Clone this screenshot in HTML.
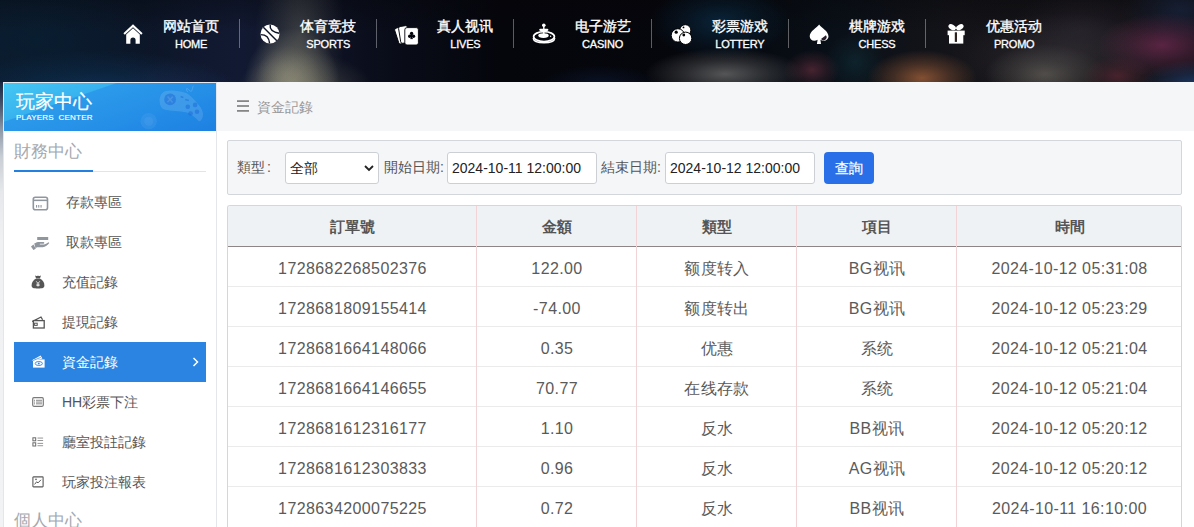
<!DOCTYPE html>
<html><head><meta charset="utf-8">
<style>
*{box-sizing:border-box;margin:0;padding:0}
html,body{width:1194px;height:527px;overflow:hidden}
body{font-family:"Liberation Sans",sans-serif;background:#f0f1f3;position:relative}
.abs{position:absolute}
#hdr{left:0;top:0;width:1194px;height:82px;background:#070a14;overflow:hidden}
#hdr .g{position:absolute;border-radius:50%}
#lstrip{left:0;top:82px;width:3px;height:445px;background:linear-gradient(#1a2640 0px,#45536b 22px,#8e99a8 48px,#c9ced5 75px,#e6e8eb 110px,#f0f1f3 160px,#f2f3f4 445px)}
.nav{position:absolute;top:0;height:82px;color:#fff}
.nav .cn{position:absolute;top:17px;font-size:14px;-webkit-text-stroke:0.35px #fff;line-height:18px;white-space:nowrap;text-align:center;width:90px}
.nav .en{position:absolute;top:37px;font-size:11px;line-height:14px;white-space:nowrap;text-align:center;width:90px;letter-spacing:-0.2px;-webkit-text-stroke:0.3px #fff}
.nav .sep{position:absolute;top:19px;width:1px;height:29px;background:rgba(255,255,255,0.35)}
.nav svg{position:absolute}
#side{left:3px;top:82px;width:214px;height:470px;background:#fff;border:1px solid #e3e6ea;border-top-color:#e8eaee}
#banner{left:4px;top:83px;width:212px;height:48px;background:linear-gradient(161deg,#44c8f4 0%,#38b2ef 31.5%,#2c9aea 32.5%,#2792e8 55%,#2188e5 80%,#1e80e1 100%);overflow:hidden}
#crumb{left:217px;top:82px;width:977px;height:49px;background:#f5f6f8}
#main{left:217px;top:131px;width:977px;height:396px;background:#fff}
.menu{position:absolute;left:62px;font-size:14px;color:#555;line-height:20px;white-space:nowrap}
#filter{left:227px;top:140px;width:955px;height:55px;background:#f5f6f8;border:1px solid #d3d7dc;border-radius:2px}
.lbl{position:absolute;font-size:14px;color:#555;line-height:16px;white-space:nowrap}
.inp{position:absolute;top:152px;height:32px;background:#fff;border:1px solid #ccd0d5;border-radius:3px;font-size:14px;color:#222;line-height:30px;padding-left:4px;white-space:nowrap}
#tbl{left:227px;top:205px;width:955px;height:330px;border:1px solid #d3d7dc;border-right-color:#efc9cd;border-radius:3px 3px 0 0;background:#fff;overflow:hidden}
.th{position:absolute;top:0;height:41px;background:#eff2f5;border-bottom:1px solid #8f8587}
.cell{position:absolute;text-align:center;font-size:16px;color:#5a5a5a;white-space:nowrap;letter-spacing:0.4px}
.hcell{position:absolute;text-align:center;font-size:15px;font-weight:bold;color:#555;white-space:nowrap}
.vl{position:absolute;top:0;width:1px;height:330px;background:#f2d3d6}
.hl{position:absolute;left:0;width:955px;height:1px;background:#ebebeb}
</style></head>
<body>
<div id="hdr" class="abs" style="background:linear-gradient(180deg,rgba(5,5,8,0.35),rgba(0,0,0,0) 40%),linear-gradient(90deg,#0c1a2c 0%,#0c1628 12%,#121a33 20%,#0a0d1a 32%,#05060c 42%,#05070d 60%,#0a1018 70%,#141419 80%,#151316 90%,#16131a 100%)"><div class="g" style="left:-55px;top:50px;width:300px;height:90px;background:radial-gradient(closest-side,rgba(15,70,120,0.6),rgba(15,70,120,0.270) 50%,rgba(15,70,120,0))"></div><div class="g" style="left:-80px;top:-20px;width:240px;height:120px;background:radial-gradient(closest-side,rgba(5,35,55,0.45),rgba(5,35,55,0.203) 50%,rgba(5,35,55,0))"></div><div class="g" style="left:1120px;top:-25px;width:120px;height:70px;background:radial-gradient(closest-side,rgba(25,45,80,0.5),rgba(25,45,80,0.225) 50%,rgba(25,45,80,0))"></div><div class="g" style="left:115px;top:60px;width:120px;height:60px;background:radial-gradient(closest-side,rgba(40,40,80,0.35),rgba(40,40,80,0.158) 50%,rgba(40,40,80,0))"></div><div class="g" style="left:244px;top:28px;width:96px;height:116px;background:radial-gradient(closest-side,rgba(175,170,145,0.85),rgba(175,170,145,0.383) 50%,rgba(175,170,145,0))"></div><div class="g" style="left:256px;top:46px;width:64px;height:60px;background:radial-gradient(closest-side,rgba(150,150,130,0.45),rgba(150,150,130,0.203) 50%,rgba(150,150,130,0))"></div><div class="g" style="left:237px;top:52px;width:136px;height:76px;background:radial-gradient(closest-side,rgba(125,122,102,0.55),rgba(125,122,102,0.248) 50%,rgba(125,122,102,0))"></div><div class="g" style="left:255px;top:-50px;width:90px;height:170px;background:radial-gradient(closest-side,rgba(110,110,95,0.45),rgba(110,110,95,0.203) 50%,rgba(110,110,95,0))"></div><div class="g" style="left:540px;top:65px;width:120px;height:40px;background:radial-gradient(closest-side,rgba(15,35,70,0.5),rgba(15,35,70,0.225) 50%,rgba(15,35,70,0))"></div><div class="g" style="left:645px;top:48px;width:160px;height:52px;background:radial-gradient(closest-side,rgba(105,105,105,0.8),rgba(105,105,105,0.360) 50%,rgba(105,105,105,0))"></div><div class="g" style="left:650px;top:-16px;width:140px;height:76px;background:radial-gradient(closest-side,rgba(12,55,85,0.6),rgba(12,55,85,0.270) 50%,rgba(12,55,85,0))"></div><div class="g" style="left:784px;top:50px;width:56px;height:40px;background:radial-gradient(closest-side,rgba(110,50,65,0.6),rgba(110,50,65,0.270) 50%,rgba(110,50,65,0))"></div><div class="g" style="left:825px;top:32px;width:60px;height:60px;background:radial-gradient(closest-side,rgba(15,50,60,0.55),rgba(15,50,60,0.248) 50%,rgba(15,50,60,0))"></div><div class="g" style="left:867px;top:50px;width:110px;height:56px;background:radial-gradient(closest-side,rgba(150,90,55,0.85),rgba(150,90,55,0.383) 50%,rgba(150,90,55,0))"></div><div class="g" style="left:985px;top:44px;width:120px;height:60px;background:radial-gradient(closest-side,rgba(105,102,92,0.75),rgba(105,102,92,0.338) 50%,rgba(105,102,92,0))"></div><div class="g" style="left:1010px;top:-10px;width:140px;height:80px;background:radial-gradient(closest-side,rgba(45,40,55,0.5),rgba(45,40,55,0.225) 50%,rgba(45,40,55,0))"></div><div class="g" style="left:950px;top:13px;width:220px;height:90px;background:radial-gradient(closest-side,rgba(70,66,72,0.45),rgba(70,66,72,0.203) 50%,rgba(70,66,72,0))"></div><div class="g" style="left:1083px;top:56px;width:70px;height:40px;background:radial-gradient(closest-side,rgba(100,40,55,0.6),rgba(100,40,55,0.270) 50%,rgba(100,40,55,0))"></div><div class="g" style="left:1097px;top:13px;width:130px;height:64px;background:radial-gradient(closest-side,rgba(125,45,88,0.65),rgba(125,45,88,0.293) 50%,rgba(125,45,88,0))"></div><div class="g" style="left:1139px;top:60px;width:110px;height:52px;background:radial-gradient(closest-side,rgba(30,75,140,0.65),rgba(30,75,140,0.293) 50%,rgba(30,75,140,0))"></div><div class="nav" style="left:0;width:1194px"><svg width="20" height="20" viewBox="0 0 20 20" style="left:122.5px;top:24px"><path d="M10 0.3 L19.6 9.3 L18.2 10.8 L10 3.2 L1.8 10.8 L0.4 9.3 Z" fill="#fff"/><path d="M3.2 10.4 L10 4.2 L16.8 10.4 V19.8 H12.6 V16.2 A2.6 2.6 0 0 0 7.4 16.2 V19.8 H3.2 Z" fill="#fff"/></svg><div class="cn" style="left:146.0px">网站首页</div><div class="en" style="left:146.0px">HOME</div><div class="sep" style="left:239px"></div><svg width="20" height="20" viewBox="0 0 20 20" style="left:259.5px;top:24px"><circle cx="10" cy="10" r="9.5" fill="#fff"/><g fill="none" stroke="#0d1326" stroke-width="1.4"><path d="M3.3 3.2 L16.8 16.7"/><path d="M10.2 0.6 C9.6 4.5 12.5 8 19.2 9.2"/><path d="M0.7 10.6 C6 10.6 9.2 13.5 9.6 19.4"/></g></svg><div class="cn" style="left:283.2px">体育竞技</div><div class="en" style="left:283.2px">SPORTS</div><div class="sep" style="left:376px"></div><svg width="26" height="25" viewBox="394 22 26 25" style="left:394px;top:22px"><rect x="396.5" y="27" width="9" height="16.5" rx="1.8" transform="rotate(-18 401 35.2)" fill="#fff" stroke="#03040a" stroke-width="0.9"/><rect x="399.6" y="26" width="9" height="17" rx="1.8" transform="rotate(-9 404 34.5)" fill="#fff" stroke="#03040a" stroke-width="0.9"/><rect x="404.8" y="27.6" width="13.6" height="17.4" rx="2.2" fill="#fff" stroke="#03040a" stroke-width="0.9"/><g fill="#03040a"><circle cx="411.6" cy="33.5" r="1.7"/><circle cx="409.7" cy="36.3" r="1.7"/><circle cx="413.5" cy="36.3" r="1.7"/><rect x="411" y="34" width="1.2" height="4.6"/><rect x="410.3" y="38.2" width="2.6" height="0.9"/></g></svg><div class="cn" style="left:420.4px">真人视讯</div><div class="en" style="left:420.4px">LIVES</div><div class="sep" style="left:513px"></div><svg width="24" height="22" viewBox="0 0 24 22" style="left:531.5px;top:23px"><g fill="none" stroke="#fff"><ellipse cx="12" cy="13.6" rx="10.4" ry="4.9" stroke-width="1.7"/><path d="M1.2 15.2 C2 21.4 22 21.4 22.8 15.2" stroke-width="1.5"/></g><ellipse cx="11.5" cy="12.6" rx="5.2" ry="2.3" fill="#fff"/><circle cx="11.8" cy="2.3" r="1.8" fill="#fff"/><rect x="11.1" y="3" width="1.4" height="9.5" fill="#fff"/><rect x="7.2" y="5.7" width="9.2" height="2.3" rx="1.15" fill="#fff"/><circle cx="18.6" cy="13.3" r="0.7" fill="#fff"/></svg><div class="cn" style="left:557.6px">电子游艺</div><div class="en" style="left:557.6px">CASINO</div><div class="sep" style="left:651px"></div><svg width="22" height="21" viewBox="0 0 22 21" style="left:670.5px;top:24px"><circle cx="14.3" cy="6.2" r="5.5" fill="#fff" stroke="#000" stroke-width="0.9"/><circle cx="6.9" cy="11.4" r="6.7" fill="#fff" stroke="#000" stroke-width="1"/><circle cx="14.6" cy="14.3" r="6.2" fill="#fff" stroke="#000" stroke-width="1"/><circle cx="12.5" cy="3.4" r="0.9" fill="#000"/><circle cx="5.2" cy="8.2" r="1.6" fill="#000"/><circle cx="12.8" cy="11" r="1.4" fill="#000"/></svg><div class="cn" style="left:694.8px">彩票游戏</div><div class="en" style="left:694.8px">LOTTERY</div><div class="sep" style="left:788px"></div><svg width="20" height="20" viewBox="0 0 20 20" style="left:808.5px;top:24px"><path d="M10.1 0.5 C8 3.6 0.7 7.2 0.7 12.2 C0.7 15.8 4.6 18 8.6 15.8 L7.9 19.9 H12.1 L11.4 15.8 C15.4 18 19.5 15.8 19.5 12.2 C19.5 7.2 12.2 3.6 10.1 0.5Z" fill="#fff"/><path d="M12 15.1 L16.9 11.3 A3.1 3.1 0 0 1 12 15.1 Z" fill="#2a1e2c"/></svg><div class="cn" style="left:832.0px">棋牌游戏</div><div class="en" style="left:832.0px">CHESS</div><div class="sep" style="left:925px"></div><svg width="19" height="20" viewBox="0 0 19 20" style="left:946.5px;top:24px"><ellipse cx="5.2" cy="3.2" rx="4" ry="2.6" transform="rotate(28 5.2 3.2)" fill="#fff"/><ellipse cx="12.8" cy="3.2" rx="4" ry="2.6" transform="rotate(-28 12.8 3.2)" fill="#fff"/><rect x="0.6" y="6.6" width="17.1" height="4.6" fill="#fff"/><rect x="2" y="11" width="14.3" height="8.6" fill="#fff"/><rect x="7.8" y="8.3" width="2.2" height="9.6" fill="#2e2220"/></svg><div class="cn" style="left:969.2px">优惠活动</div><div class="en" style="left:969.2px">PROMO</div></div></div>
<div id="lstrip" class="abs"></div>
<div id="side" class="abs"></div>
<div id="banner" class="abs"><div style="position:absolute;left:12px;top:8px;font-size:19px;line-height:22px;color:#fff;white-space:nowrap;-webkit-text-stroke:0.2px #fff">玩家中心</div><div style="position:absolute;left:12px;top:30px;font-size:8px;line-height:9px;color:#fff;letter-spacing:0.2px;white-space:nowrap;-webkit-text-stroke:0.15px #fff">PLAYERS&nbsp; CENTER</div><svg width="212" height="48" viewBox="4 83 212 48" style="position:absolute;left:0;top:0"><path d="M165.1 91.2 C161 93 159.4 97 159.6 101.2 C159.8 105.5 161.5 108.5 164.2 109.4 C171 111 180 111 186 112.2 C191 113.5 195 117 198.8 121.3 C201.5 121.8 203.5 117 202.9 113.1 C202 109 200 106 197.9 104 C194 99 190 95 186 93 C179 90.5 171 89.8 165.1 91.2Z" fill="rgba(255,255,255,0.12)"/><circle cx="170.1" cy="99.4" r="5.9" fill="rgba(30,110,215,0.55)"/><path d="M167.6 96.4 L172.6 102.4 M172.8 96.6 L167.4 102.2" stroke="rgba(255,255,255,0.12)" stroke-width="1.6"/><path d="M180.6 96.4 L183.4 97.6 M185.2 99.6 L188.8 100.6" stroke="rgba(30,110,215,0.55)" stroke-width="1.6"/><g fill="rgba(30,110,215,0.55)"><circle cx="187.8" cy="106.7" r="2.3"/><circle cx="195.1" cy="104.9" r="2.3"/><circle cx="190.6" cy="113.5" r="2.3"/><circle cx="197" cy="111.7" r="2.3"/></g><path d="M187.8 92.1 C186 90 186.4 88.2 187 88.4 C189 89.5 190.5 92 191.5 91.2 C192.5 90 192.4 87.5 193.3 85.7" fill="none" stroke="rgba(255,255,255,0.14)" stroke-width="1"/><circle cx="148.7" cy="121.3" r="8.2" fill="rgba(255,255,255,0.06)"/><circle cx="148.7" cy="121.3" r="4.5" fill="rgba(255,255,255,0.05)"/></svg></div>
<div class="abs" style="left:14px;top:142px;font-size:17px;line-height:20px;color:#a4a9b0;white-space:nowrap">財務中心</div>
<div class="abs" style="left:14px;top:171px;width:192px;height:1px;background:#e2e4e8"></div>
<div class="abs" style="left:14px;top:170px;width:79px;height:2px;background:#2280e0"></div>
<div class="abs" style="left:14px;top:342px;width:192px;height:40px;background:#2b84e2"></div>
<div class="menu" style="left:66px;top:192px;color:#555">存款專區</div>
<div class="menu" style="left:66px;top:232px;color:#555">取款專區</div>
<div class="menu" style="left:62px;top:272px;color:#555">充值記錄</div>
<div class="menu" style="left:62px;top:312px;color:#555">提現記錄</div>
<div class="menu" style="left:62px;top:352px;color:#fff">資金記錄</div>
<div class="menu" style="left:62px;top:392px;color:#555">HH彩票下注</div>
<div class="menu" style="left:62px;top:432px;color:#555">廳室投註記錄</div>
<div class="menu" style="left:62px;top:472px;color:#555">玩家投注報表</div>
<div class="abs" style="left:14px;top:511px;font-size:17px;line-height:20px;color:#a4a9b0;white-space:nowrap">個人中心</div>
<svg class="abs" width="8" height="10" viewBox="0 0 8 10" style="left:192px;top:357px"><path d="M1.5 1 L5.5 5 L1.5 9" fill="none" stroke="#fff" stroke-width="1.5"/></svg>
<svg class="abs" width="17" height="15" viewBox="0 0 17 15" style="left:31.5px;top:195.5px"><rect x="1.3" y="1.2" width="14.2" height="12.6" rx="2" fill="none" stroke="#8f969e" stroke-width="1.6"/><rect x="1.3" y="3.6" width="14.2" height="1.5" fill="#8f969e"/><g fill="#8f969e"><rect x="4" y="9" width="1.1" height="2.6"/><rect x="6.2" y="9" width="1.1" height="2.6"/><rect x="8.5" y="9" width="1.1" height="2.6"/></g></svg>
<svg class="abs" width="20" height="14" viewBox="0 0 20 14" style="left:30px;top:236px"><g fill="#8f969e"><rect x="7.2" y="1" width="11" height="3"/><path d="M4.2 7.6 C6 6.3 7.6 5.9 9.5 5.9 H13.4 C14.6 5.9 14.6 7.7 13.4 7.7 H9.8 V8.5 H14 C15.2 8.5 17 7.3 18.6 6.2 L19.3 7.1 C17.6 9.2 15.6 11.2 12.6 11.2 H7 L5.6 12.3 Z"/><path d="M1 10.6 L3.5 8.4 L5.8 12.8 L3.4 14 Z"/></g></svg>
<svg class="abs" width="14" height="14" viewBox="0 0 14 14" style="left:31px;top:274.5px"><path d="M4 0.6 C5.2 1.4 6.2 1 7 0.4 C7.8 1 8.8 1.4 10 0.6 L9 3.3 H5 Z" fill="#555"/><path d="M5.2 3.6 H8.8 C11.8 5 13.4 7.8 13.4 10.4 C13.4 12.8 11.6 13.4 7 13.4 C2.4 13.4 0.6 12.8 0.6 10.4 C0.6 7.8 2.2 5 5.2 3.6Z" fill="#555"/><path d="M5.2 6.3 L7 8.4 L8.8 6.3 M7 8.4 V11.6 M5.4 9.2 H8.6 M5.4 10.4 H8.6" fill="none" stroke="#fff" stroke-width="0.8"/></svg>
<svg class="abs" width="14" height="13" viewBox="0 0 14 13" style="left:31px;top:315.5px"><path d="M1.2 5.6 L10 1 L11.6 3.8" fill="none" stroke="#555" stroke-width="1.3"/><rect x="2.4" y="4.6" width="10.8" height="7.4" fill="#fff" stroke="#555" stroke-width="1.3"/><rect x="3.6" y="7.2" width="2.6" height="2.2" fill="none" stroke="#555" stroke-width="1"/></svg>
<svg class="abs" width="14" height="13" viewBox="0 0 14 13" style="left:31px;top:355px"><path d="M0.6 5.4 L9.6 0.4 L11.4 3.6 L5 5.2 Z" fill="#fff"/><rect x="2" y="4.4" width="11.6" height="8.2" fill="#fff"/><ellipse cx="7.8" cy="8.5" rx="3.6" ry="2" fill="none" stroke="#2b84e2" stroke-width="0.9"/><circle cx="7.8" cy="8.5" r="0.9" fill="#2b84e2"/><path d="M2 5.5 L9.8 2.4" stroke="#2b84e2" stroke-width="0.7"/></svg>
<svg class="abs" width="12" height="10" viewBox="0 0 12 10" style="left:31.5px;top:396.5px"><rect x="0.7" y="0.7" width="10.6" height="8.6" rx="1.2" fill="none" stroke="#7a7a7a" stroke-width="1.2"/><g fill="#7a7a7a"><rect x="4" y="2.8" width="6" height="0.9"/><rect x="4" y="4.6" width="6" height="0.9"/><rect x="4" y="6.4" width="6" height="0.9"/><rect x="2" y="2.8" width="1" height="0.9"/><rect x="2" y="4.6" width="1" height="0.9"/><rect x="2" y="6.4" width="1" height="0.9"/></g></svg>
<svg class="abs" width="12" height="10" viewBox="0 0 12 10" style="left:31.5px;top:436.8px"><g fill="none" stroke="#6a6a6a" stroke-width="1"><rect x="0.9" y="0.8" width="2.8" height="3"/><rect x="0.9" y="5.8" width="2.8" height="3.2"/></g><g fill="#8a8a8a"><rect x="5.5" y="0.6" width="5.6" height="0.9"/><rect x="5.5" y="3" width="5.6" height="0.9"/><rect x="5.5" y="5.9" width="5.6" height="0.9"/><rect x="5.5" y="8.3" width="5.6" height="0.9"/></g></svg>
<svg class="abs" width="12" height="12" viewBox="0 0 12 12" style="left:31.5px;top:475.5px"><rect x="0.9" y="0.9" width="10.2" height="10" rx="0.6" fill="none" stroke="#5a5a5a" stroke-width="1.1"/><path d="M2.6 8.4 L4.6 5.8 L6 6.9 L9 3.8" fill="none" stroke="#5a5a5a" stroke-width="1"/><circle cx="4" cy="3.4" r="0.8" fill="#5a5a5a"/></svg>
<div id="crumb" class="abs"></div>
<div id="main" class="abs"></div>
<svg class="abs" width="13" height="12" viewBox="0 0 13 12" style="left:237px;top:100px"><g fill="#7a7a7a"><rect x="0" y="0.3" width="12" height="1.6"/><rect x="0" y="5.2" width="12" height="1.6"/><rect x="0" y="10.1" width="12" height="1.6"/></g></svg>
<div class="abs" style="left:257px;top:97px;font-size:14px;line-height:20px;color:#999;white-space:nowrap">資金記錄</div>
<div id="filter" class="abs"></div>
<div class="lbl" style="left:237px;top:159px">類型<span style="margin-left:2px">:</span></div>
<div class="inp" style="left:285px;width:94px">全部<svg width="10" height="7" viewBox="0 0 10 7" style="position:absolute;left:78px;top:12px"><path d="M1 1 L5 5 L9 1" fill="none" stroke="#222" stroke-width="1.8"/></svg></div>
<div class="lbl" style="left:384px;top:159px">開始日期:</div>
<div class="inp" style="left:447px;width:150px">2024-10-11 12:00:00</div>
<div class="lbl" style="left:601px;top:159px">結束日期:</div>
<div class="inp" style="left:665px;width:150px">2024-10-12 12:00:00</div>
<div class="abs" style="left:824px;top:152px;width:50px;height:32px;background:#2970e8;border-radius:4px;color:#fff;font-size:14px;line-height:32px;text-align:center;-webkit-text-stroke:0.25px #fff">查詢</div>
<div id="tbl" class="abs">
<div class="th" style="left:0;width:955px"></div>
<div class="hcell" style="left:0px;width:249px;top:11px;line-height:20px">訂單號</div>
<div class="hcell" style="left:249px;width:160px;top:11px;line-height:20px">金額</div>
<div class="hcell" style="left:409px;width:160px;top:11px;line-height:20px">類型</div>
<div class="hcell" style="left:569px;width:160px;top:11px;line-height:20px">項目</div>
<div class="hcell" style="left:729px;width:225px;top:11px;line-height:20px">時間</div>
<div class="cell" style="left:0px;width:249px;top:52px;line-height:22px">1728682268502376</div>
<div class="cell" style="left:249px;width:160px;top:52px;line-height:22px">122.00</div>
<div class="cell" style="left:409px;width:160px;top:52px;line-height:22px">额度转入</div>
<div class="cell" style="left:569px;width:160px;top:52px;line-height:22px">BG视讯</div>
<div class="cell" style="left:729px;width:225px;top:52px;line-height:22px">2024-10-12 05:31:08</div>
<div class="hl" style="top:80px"></div>
<div class="cell" style="left:0px;width:249px;top:92px;line-height:22px">1728681809155414</div>
<div class="cell" style="left:249px;width:160px;top:92px;line-height:22px">-74.00</div>
<div class="cell" style="left:409px;width:160px;top:92px;line-height:22px">额度转出</div>
<div class="cell" style="left:569px;width:160px;top:92px;line-height:22px">BG视讯</div>
<div class="cell" style="left:729px;width:225px;top:92px;line-height:22px">2024-10-12 05:23:29</div>
<div class="hl" style="top:120px"></div>
<div class="cell" style="left:0px;width:249px;top:132px;line-height:22px">1728681664148066</div>
<div class="cell" style="left:249px;width:160px;top:132px;line-height:22px">0.35</div>
<div class="cell" style="left:409px;width:160px;top:132px;line-height:22px">优惠</div>
<div class="cell" style="left:569px;width:160px;top:132px;line-height:22px">系统</div>
<div class="cell" style="left:729px;width:225px;top:132px;line-height:22px">2024-10-12 05:21:04</div>
<div class="hl" style="top:160px"></div>
<div class="cell" style="left:0px;width:249px;top:172px;line-height:22px">1728681664146655</div>
<div class="cell" style="left:249px;width:160px;top:172px;line-height:22px">70.77</div>
<div class="cell" style="left:409px;width:160px;top:172px;line-height:22px">在线存款</div>
<div class="cell" style="left:569px;width:160px;top:172px;line-height:22px">系统</div>
<div class="cell" style="left:729px;width:225px;top:172px;line-height:22px">2024-10-12 05:21:04</div>
<div class="hl" style="top:200px"></div>
<div class="cell" style="left:0px;width:249px;top:212px;line-height:22px">1728681612316177</div>
<div class="cell" style="left:249px;width:160px;top:212px;line-height:22px">1.10</div>
<div class="cell" style="left:409px;width:160px;top:212px;line-height:22px">反水</div>
<div class="cell" style="left:569px;width:160px;top:212px;line-height:22px">BB视讯</div>
<div class="cell" style="left:729px;width:225px;top:212px;line-height:22px">2024-10-12 05:20:12</div>
<div class="hl" style="top:240px"></div>
<div class="cell" style="left:0px;width:249px;top:252px;line-height:22px">1728681612303833</div>
<div class="cell" style="left:249px;width:160px;top:252px;line-height:22px">0.96</div>
<div class="cell" style="left:409px;width:160px;top:252px;line-height:22px">反水</div>
<div class="cell" style="left:569px;width:160px;top:252px;line-height:22px">AG视讯</div>
<div class="cell" style="left:729px;width:225px;top:252px;line-height:22px">2024-10-12 05:20:12</div>
<div class="hl" style="top:280px"></div>
<div class="cell" style="left:0px;width:249px;top:292px;line-height:22px">1728634200075225</div>
<div class="cell" style="left:249px;width:160px;top:292px;line-height:22px">0.72</div>
<div class="cell" style="left:409px;width:160px;top:292px;line-height:22px">反水</div>
<div class="cell" style="left:569px;width:160px;top:292px;line-height:22px">BB视讯</div>
<div class="cell" style="left:729px;width:225px;top:292px;line-height:22px">2024-10-11 16:10:00</div>
<div class="vl" style="left:248px"></div>
<div class="vl" style="left:408px"></div>
<div class="vl" style="left:568px"></div>
<div class="vl" style="left:728px"></div>
</div>
</body></html>
